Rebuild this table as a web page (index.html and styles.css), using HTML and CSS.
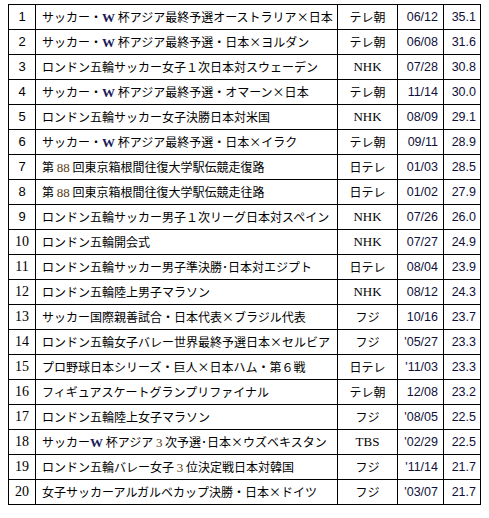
FILE: index.html
```html
<!DOCTYPE html>
<html lang="ja">
<head>
<meta charset="utf-8">
<link rel="stylesheet" href="styles.css">
</head>
<body>
<table class="rank">
<colgroup>
<col class="c-no"><col class="c-title"><col class="c-ch"><col class="c-date"><col class="c-rate">
</colgroup>
<tbody>
<tr><td class="no">1</td><td class="title">サッカー・<span class="w">W</span> 杯アジア最終予選オーストラリア×日本</td><td class="ch">テレ朝</td><td class="date">06/12</td><td class="rate">35.1</td></tr>
<tr><td class="no">2</td><td class="title">サッカー・<span class="w">W</span> 杯アジア最終予選・日本×ヨルダン</td><td class="ch">テレ朝</td><td class="date">06/08</td><td class="rate">31.6</td></tr>
<tr><td class="no">3</td><td class="title">ロンドン五輪サッカー女子１次日本対スウェーデン</td><td class="ch lat">NHK</td><td class="date">07/28</td><td class="rate">30.8</td></tr>
<tr><td class="no">4</td><td class="title">サッカー・<span class="w">W</span> 杯アジア最終予選・オマーン×日本</td><td class="ch">テレ朝</td><td class="date">11/14</td><td class="rate">30.0</td></tr>
<tr><td class="no">5</td><td class="title">ロンドン五輪サッカー女子決勝日本対米国</td><td class="ch lat">NHK</td><td class="date">08/09</td><td class="rate">29.1</td></tr>
<tr><td class="no">6</td><td class="title">サッカー・<span class="w">W</span> 杯アジア最終予選・日本×イラク</td><td class="ch">テレ朝</td><td class="date">09/11</td><td class="rate">28.9</td></tr>
<tr><td class="no">7</td><td class="title">第 <span class="num">88</span> 回東京箱根間往復大学駅伝競走復路</td><td class="ch">日テレ</td><td class="date">01/03</td><td class="rate">28.5</td></tr>
<tr><td class="no">8</td><td class="title">第 <span class="num">88</span> 回東京箱根間往復大学駅伝競走往路</td><td class="ch">日テレ</td><td class="date">01/02</td><td class="rate">27.9</td></tr>
<tr><td class="no">9</td><td class="title">ロンドン五輪サッカー男子１次リーグ日本対スペイン</td><td class="ch lat">NHK</td><td class="date">07/26</td><td class="rate">26.0</td></tr>
<tr><td class="no serif">10</td><td class="title">ロンドン五輪開会式</td><td class="ch lat">NHK</td><td class="date">07/27</td><td class="rate">24.9</td></tr>
<tr><td class="no serif">11</td><td class="title">ロンドン五輪サッカー男子準決勝･日本対エジプト</td><td class="ch">日テレ</td><td class="date">08/04</td><td class="rate">23.9</td></tr>
<tr><td class="no serif">12</td><td class="title">ロンドン五輪陸上男子マラソン</td><td class="ch lat">NHK</td><td class="date">08/12</td><td class="rate">24.3</td></tr>
<tr><td class="no serif">13</td><td class="title">サッカー国際親善試合・日本代表×ブラジル代表</td><td class="ch">フジ</td><td class="date">10/16</td><td class="rate">23.7</td></tr>
<tr><td class="no serif">14</td><td class="title">ロンドン五輪女子バレー世界最終予選日本×セルビア</td><td class="ch">フジ</td><td class="date">'05/27</td><td class="rate">23.3</td></tr>
<tr><td class="no serif">15</td><td class="title">プロ野球日本シリーズ・巨人×日本ハム・第６戦</td><td class="ch">日テレ</td><td class="date">'11/03</td><td class="rate">23.3</td></tr>
<tr><td class="no serif">16</td><td class="title">フィギュアスケートグランプリファイナル</td><td class="ch">テレ朝</td><td class="date">12/08</td><td class="rate">23.2</td></tr>
<tr><td class="no serif">17</td><td class="title">ロンドン五輪陸上女子マラソン</td><td class="ch">フジ</td><td class="date">'08/05</td><td class="rate">22.5</td></tr>
<tr><td class="no serif">18</td><td class="title">サッカー<span class="w">W</span> 杯アジア <span class="num">3</span> 次予選･日本×ウズベキスタン</td><td class="ch lat">TBS</td><td class="date">'02/29</td><td class="rate">22.5</td></tr>
<tr><td class="no serif">19</td><td class="title">ロンドン五輪バレー女子 <span class="num">3</span> 位決定戦日本対韓国</td><td class="ch">フジ</td><td class="date">'11/14</td><td class="rate">21.7</td></tr>
<tr><td class="no serif">20</td><td class="title">女子サッカーアルガルベカップ決勝・日本×ドイツ</td><td class="ch">フジ</td><td class="date">'03/07</td><td class="rate">21.7</td></tr>
</tbody>
</table>
</body>
</html>
```
FILE: styles.css
```css
html, body {
  background: #ffffff;
}
body {
  margin: 4px 0 0 8px;
  font-family: "Noto Sans CJK JP", "Noto Sans", sans-serif;
  font-size: 12px;
  color: #000000;
}
.rank {
  border-collapse: collapse;
  table-layout: fixed;
  width: 473px;
}
.c-no { width: 27px; }
.c-title { width: 302px; }
.c-ch { width: 60px; }
.c-date { width: 46px; }
.c-rate { width: 37px; }
.rank td {
  border: 1px solid #000000;
  height: 24px;
  padding: 0;
  line-height: 14px;
  white-space: nowrap;
  overflow: hidden;
}
.no {
  text-align: center;
  font-family: "Liberation Sans", sans-serif;
  font-size: 13px;
}
.no.serif {
  font-family: "Liberation Serif", serif;
  font-size: 14px;
}
.title {
  padding-left: 6px !important;
}
.w {
  font-family: "Liberation Serif", serif;
  font-weight: bold;
  font-size: 13px;
  color: #1a1a5a;
}
.num {
  font-family: "Liberation Serif", serif;
  font-size: 13px;
  color: #5a3a10;
}
.ch {
  text-align: center;
}
.ch.lat {
  font-family: "Liberation Serif", serif;
  font-size: 13px;
}
.date, .rate {
  text-align: right;
  font-family: "Liberation Sans", sans-serif;
  font-size: 12.5px;
  color: #10103a;
}
.date { padding-right: 5px !important; }
.rate { padding-right: 4px !important; }
```
